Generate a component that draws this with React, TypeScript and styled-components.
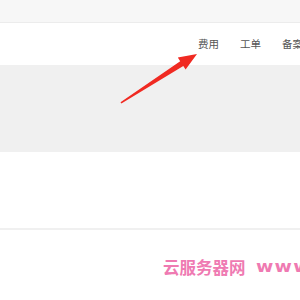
import React from "react";
import styled, { createGlobalStyle } from "styled-components";

const GlobalStyle = createGlobalStyle`
  html, body {
    margin: 0;
    padding: 0;
    background: #ffffff;
    font-family: "Noto Sans CJK SC", "Liberation Sans", sans-serif;
  }
`;

const Page = styled.div`
  position: relative;
  width: 300px;
  height: 300px;
  overflow: hidden;
  background: #ffffff;
`;

const TopStrip = styled.div`
  height: 22px;
  background: #f7f7f7;
  border-bottom: 1px solid #ececec;
`;

const NavBar = styled.nav`
  height: 42px;
  display: flex;
  align-items: center;
  gap: 21px;
  padding-left: 198px;
  background: #ffffff;
  white-space: nowrap;
`;

const NavItem = styled.span`
  font-size: 10.5px;
  color: #555555;
  line-height: 1;
`;

const Banner = styled.div`
  height: 87px;
  background: #f0f0f0;
`;

const Panel = styled.div`
  height: 76px;
  background: #ffffff;
  border-bottom: 2px solid #f0f0f0;
`;

const Footer = styled.div`
  height: 70px;
  background: #ffffff;
`;

/* watermark sits over the page content */
const Watermark = styled.div`
  position: absolute;
  left: 163px;
  top: 255px;
  display: flex;
  align-items: center;
  gap: 10px;
  color: #ec5aa0;
  opacity: 0.8;
  white-space: nowrap;
`;

const MarkName = styled.span`
  font-size: 16.5px;
  font-weight: 700;
`;

const MarkUrl = styled.span`
  font-family: "DejaVu Sans", sans-serif;
  font-size: 15px;
  font-weight: 700;
  letter-spacing: 1px;
  transform: scaleX(1.25);
  transform-origin: left center;
`;

const Arrow = styled.svg`
  position: absolute;
  left: 0;
  top: 0;
  pointer-events: none;
`;

export default function App() {
  return (
    <>
      <GlobalStyle />
      <Page>
        <TopStrip />
        <NavBar>
          <NavItem>费用</NavItem>
          <NavItem>工单</NavItem>
          <NavItem>备案</NavItem>
        </NavBar>
        <Banner />
        <Panel />
        <Footer />
        <Watermark>
          <MarkName>云服务器网</MarkName>
          <MarkUrl>www</MarkUrl>
        </Watermark>
        <Arrow width="300" height="300" viewBox="0 0 300 300">
          <polygon
            points="120.5,102.2 180.2,61.2 177.8,57.6 197,54 185.6,69.4 183.3,65.9 121.4,103.4"
            fill="#f02a22"
          />
        </Arrow>
      </Page>
    </>
  );
}
